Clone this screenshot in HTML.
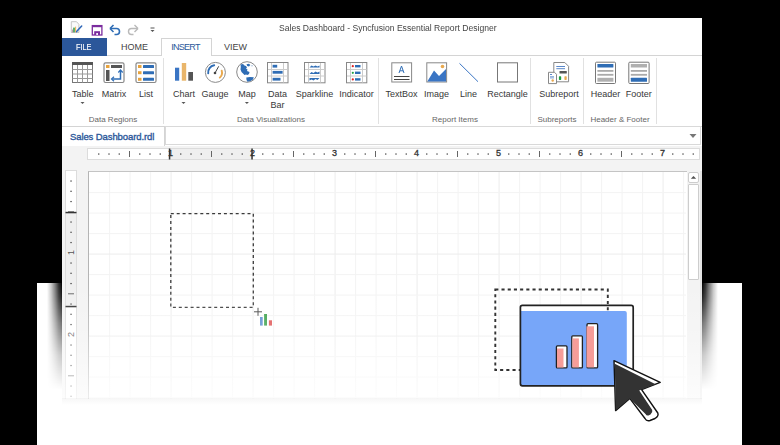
<!DOCTYPE html><html><head><meta charset="utf-8"><style>
*{margin:0;padding:0;box-sizing:border-box}
html,body{width:780px;height:445px;overflow:hidden;background:#000}
body{position:relative;font-family:"Liberation Sans",sans-serif;color:#444}
.abs{position:absolute}
.t{position:absolute;white-space:nowrap;line-height:1}
svg{position:absolute;overflow:visible}
</style></head><body>
<div class="abs" style="left:37px;top:283px;width:705px;height:162px;background:#fff"></div><div class="abs" style="left:47px;top:283px;width:15px;height:116px;background:linear-gradient(to left,rgba(0,0,0,1) 0%,rgba(0,0,0,0.82) 22%,rgba(0,0,0,0.52) 45%,rgba(0,0,0,0.22) 72%,rgba(0,0,0,0) 100%);-webkit-mask-image:linear-gradient(to bottom,#000 0%,rgba(0,0,0,0.88) 12%,rgba(0,0,0,0.55) 35%,rgba(0,0,0,0.22) 62%,rgba(0,0,0,0) 92%)"></div><div class="abs" style="left:702px;top:283px;width:16px;height:116px;background:linear-gradient(to right,rgba(0,0,0,1) 0%,rgba(0,0,0,0.82) 22%,rgba(0,0,0,0.52) 45%,rgba(0,0,0,0.22) 72%,rgba(0,0,0,0) 100%);-webkit-mask-image:linear-gradient(to bottom,#000 0%,rgba(0,0,0,0.88) 12%,rgba(0,0,0,0.55) 35%,rgba(0,0,0,0.22) 62%,rgba(0,0,0,0) 92%)"></div><div class="abs" id="win" style="left:62px;top:18px;width:640px;height:381px;background:#fff;overflow:hidden"><div class="abs" style="left:-62px;top:-18px;width:780px;height:445px"><div class="t" style="left:279px;top:22.8px;font-size:9.6px;color:#444;transform:scaleX(0.895);transform-origin:0 0">Sales Dashboard - Syncfusion Essential Report Designer</div><svg style="left:0;top:0" width="780" height="445" viewBox="0 0 780 445">
<!-- app icon -->
<path d="M71.3 21.7 h5.2 l2.4 2.6 v8.2 h-7.6 z" fill="#fafafa" stroke="#bdbdbd" stroke-width="0.9"/>
<rect x="72.3" y="29.5" width="0.9" height="2.8" fill="#b07090"/>
<rect x="73.1" y="27.6" width="1.8" height="4.7" fill="#4fa860"/>
<rect x="75" y="26.7" width="1.1" height="5.6" fill="#f0b860"/>
<path d="M76.6 31.6 L81.7 26.1" stroke="#2f67b8" stroke-width="1.5" stroke-linecap="round"/>
<!-- save -->
<rect x="92.3" y="25.6" width="9.6" height="9.4" fill="none" stroke="#7b2c9e" stroke-width="1.3"/>
<rect x="92.3" y="25.6" width="9.6" height="1.6" fill="#7b2c9e"/>
<rect x="94.2" y="31.2" width="5.8" height="3.8" fill="#7b2c9e"/>
<rect x="96.3" y="33" width="1.6" height="2" fill="#fff"/>
<!-- undo -->
<path d="M111 28.5 h5.5 a3 3 0 0 1 0 6 h-2" fill="none" stroke="#2f6db5" stroke-width="1.6"/>
<path d="M110 28.5 l3.5 -3.5 M110 28.5 l3.5 3.5" fill="none" stroke="#2f6db5" stroke-width="1.6"/>
<!-- redo -->
<path d="M137 28.5 h-5.5 a3 3 0 0 0 0 6 h2" fill="none" stroke="#b9b9b9" stroke-width="1.4"/>
<path d="M138 28.5 l-3.5 -3.5 M138 28.5 l-3.5 3.5" fill="none" stroke="#b9b9b9" stroke-width="1.4"/>
<!-- customize -->
<rect x="150.5" y="27.5" width="4" height="1" fill="#555"/>
<path d="M150.5 30 h4 l-2 2 z" fill="#555"/>
</svg><div class="abs" style="left:62px;top:55px;width:640px;height:1px;background:#d4d4d4"></div><div class="abs" style="left:62px;top:38px;width:45px;height:18px;background:#2b579a"></div><div class="t" style="left:76.3px;top:42.8px;font-size:9.2px;color:#fff;-webkit-text-stroke:0.15px #fff;transform:scaleX(0.8);transform-origin:0 0">FILE</div><div class="t" style="left:121px;top:42.6px;font-size:9px;color:#444">HOME</div><div class="abs" style="left:161px;top:38px;width:51px;height:18px;background:#fff;border:1px solid #d4d4d4;border-bottom:none"></div><div class="t" style="left:171.3px;top:42.6px;font-size:9px;letter-spacing:-0.75px;color:#2b579a">INSERT</div><div class="t" style="left:224px;top:42.6px;font-size:9px;color:#444">VIEW</div><div class="abs" style="left:62px;top:126px;width:640px;height:1px;background:#d4d4d4"></div><div class="abs" style="left:163px;top:58px;width:1px;height:66px;background:#e1e1e1"></div><div class="abs" style="left:378px;top:58px;width:1px;height:66px;background:#e1e1e1"></div><div class="abs" style="left:530px;top:58px;width:1px;height:66px;background:#e1e1e1"></div><div class="abs" style="left:583px;top:58px;width:1px;height:66px;background:#e1e1e1"></div><div class="abs" style="left:656px;top:58px;width:1px;height:66px;background:#e1e1e1"></div><div class="t" style="left:22.700000000000003px;width:120px;text-align:center;top:89.6px;font-size:9px;color:#383838">Table</div><div class="t" style="left:54px;width:120px;text-align:center;top:89.6px;font-size:9px;color:#383838">Matrix</div><div class="t" style="left:86px;width:120px;text-align:center;top:89.6px;font-size:9px;color:#383838">List</div><div class="t" style="left:124px;width:120px;text-align:center;top:89.6px;font-size:9px;color:#383838">Chart</div><div class="t" style="left:155px;width:120px;text-align:center;top:89.6px;font-size:9px;color:#383838">Gauge</div><div class="t" style="left:187px;width:120px;text-align:center;top:89.6px;font-size:9px;color:#383838">Map</div><div class="t" style="left:217.5px;width:120px;text-align:center;top:89.6px;font-size:9px;color:#383838">Data</div><div class="t" style="left:217.5px;width:120px;text-align:center;top:100.6px;font-size:9px;color:#383838">Bar</div><div class="t" style="left:254.5px;width:120px;text-align:center;top:89.6px;font-size:9px;color:#383838">Sparkline</div><div class="t" style="left:296.5px;width:120px;text-align:center;top:89.6px;font-size:9px;color:#383838">Indicator</div><div class="t" style="left:341.5px;width:120px;text-align:center;top:89.6px;font-size:9px;color:#383838">TextBox</div><div class="t" style="left:376.5px;width:120px;text-align:center;top:89.6px;font-size:9px;color:#383838">Image</div><div class="t" style="left:408.5px;width:120px;text-align:center;top:89.6px;font-size:9px;color:#383838">Line</div><div class="t" style="left:447.5px;width:120px;text-align:center;top:89.6px;font-size:9px;color:#383838">Rectangle</div><div class="t" style="left:499px;width:120px;text-align:center;top:89.6px;font-size:9px;color:#383838">Subreport</div><div class="t" style="left:545.5px;width:120px;text-align:center;top:89.6px;font-size:9px;color:#383838">Header</div><div class="t" style="left:578.8px;width:120px;text-align:center;top:89.6px;font-size:9px;color:#383838">Footer</div><div class="t" style="left:53px;width:120px;text-align:center;top:115.6px;font-size:8px;color:#666">Data Regions</div><div class="t" style="left:211px;width:120px;text-align:center;top:115.6px;font-size:8px;color:#666">Data Visualizations</div><div class="t" style="left:395px;width:120px;text-align:center;top:115.6px;font-size:8px;color:#666">Report Items</div><div class="t" style="left:497px;width:120px;text-align:center;top:115.6px;font-size:8px;color:#666">Subreports</div><div class="t" style="left:560px;width:120px;text-align:center;top:115.6px;font-size:8px;color:#666">Header &amp; Footer</div><svg style="left:0;top:0" width="780" height="445" viewBox="0 0 780 445">
<g stroke="#999" stroke-width="1" fill="none">
<rect x="72.5" y="62.5" width="20" height="20" fill="#fff" stroke="#777"/>
<line x1="77.5" y1="65" x2="77.5" y2="82.5"/><line x1="82.5" y1="65" x2="82.5" y2="82.5"/><line x1="87.5" y1="65" x2="87.5" y2="82.5"/>
<line x1="72.5" y1="69.5" x2="92.5" y2="69.5"/><line x1="72.5" y1="74" x2="92.5" y2="74"/><line x1="72.5" y1="78.5" x2="92.5" y2="78.5"/>
</g>
<rect x="72" y="62" width="21" height="3" fill="#555"/>
<path d="M80.5 102 h4 l-2 2 z" fill="#555"/>
<!-- matrix -->
<rect x="104" y="62.8" width="20" height="19.7" rx="1.5" fill="#fff" stroke="#888" stroke-width="1.2"/>
<rect x="106" y="65" width="3.5" height="3" fill="#e8a33d"/>
<rect x="111" y="65" width="11" height="3" fill="#555"/>
<rect x="106" y="70" width="3.5" height="11" fill="#555"/>
<path d="M120.5 71 v8 h-8" fill="none" stroke="#2f6db5" stroke-width="1.5"/>
<path d="M118.3 72.5 l2.2 -2.5 l2.2 2.5 M114 76.8 l-2.5 2.2 l2.5 2.2" fill="none" stroke="#2f6db5" stroke-width="1.2"/>
<!-- list -->
<rect x="136" y="62.8" width="20" height="19.7" rx="1.5" fill="#fff" stroke="#888" stroke-width="1.2"/>
<rect x="138" y="65" width="3.5" height="3" fill="#e8a33d"/><rect x="143" y="65" width="11" height="3" rx="0.5" fill="#2f6db5"/>
<rect x="138" y="71.2" width="3.5" height="3" fill="#e8a33d"/><rect x="143" y="71.2" width="11" height="3" rx="0.5" fill="#2f6db5"/>
<rect x="138" y="77.8" width="3.5" height="3" fill="#e8a33d"/><rect x="143" y="77.8" width="11" height="3" rx="0.5" fill="#2f6db5"/>
<!-- chart -->
<rect x="175" y="67.7" width="4.2" height="13" fill="#3a75c4"/>
<rect x="181.8" y="63" width="4.4" height="17.7" fill="#e9b56a"/>
<rect x="188.3" y="72" width="4.7" height="8.7" fill="#555"/>
<path d="M181.5 102 h4 l-2 2 z" fill="#555"/>
<!-- gauge -->
<circle cx="215.4" cy="72.4" r="10" fill="#fff" stroke="#8a8a8a" stroke-width="1"/>
<path d="M208.2 73.4 A7.3 7.3 0 0 1 214.2 65.2" fill="none" stroke="#2f6db5" stroke-width="1.9" stroke-linecap="round"/>
<path d="M221.7 70.6 A6.8 6.8 0 0 1 219.8 77.6" fill="none" stroke="#e9a94e" stroke-width="1.9" stroke-linecap="round"/>
<line x1="215" y1="73" x2="218.7" y2="66.3" stroke="#444" stroke-width="1"/>
<circle cx="215" cy="73" r="1.3" fill="#444"/>
<!-- map -->
<circle cx="247" cy="72" r="10.3" fill="#fff" stroke="#8a8a8a" stroke-width="1"/>
<path d="M240.5 64.5 L243 64 L244.5 65.5 L246 66 L247 67.5 L246 68.5 L247.5 69.5 L247 71 L249.5 72 L249 74 L247.5 75 L246 74.5 L244.5 75 L243 73.5 L241.5 72 L240.5 69.5 L240.8 67 Z" fill="#2f6db5"/>
<path d="M246.5 64.3 L249 63.8 L250.3 65 L249 66.5 L247.2 66 Z" fill="#2f6db5"/>
<circle cx="252" cy="65.8" r="0.5" fill="#2f6db5"/>
<path d="M246.3 77.6 L250 77 L253.8 77.2 L253 79.5 L250.5 81 L247.5 81.8 L246.5 80 Z" fill="#2f6db5"/>
<path d="M244.9 102 h4 l-2 2 z" fill="#555"/>
<!-- databar / sparkline / indicator -->
<g stroke="#888" stroke-width="1" fill="#fff">
<rect x="267.5" y="62.5" width="20.5" height="20.3"/>
<rect x="304.5" y="62.5" width="20.5" height="20.3"/>
<rect x="346.5" y="62.5" width="20.3" height="20.3"/>
</g>
<g stroke="#ccc" stroke-width="1">
<line x1="271.5" y1="63" x2="271.5" y2="82.5"/><line x1="283.5" y1="63" x2="283.5" y2="82.5"/>
<line x1="268" y1="69.5" x2="287.5" y2="69.5"/><line x1="268" y1="76" x2="287.5" y2="76"/>
<line x1="308.5" y1="63" x2="308.5" y2="82.5"/><line x1="320.5" y1="63" x2="320.5" y2="82.5"/>
<line x1="305" y1="69.5" x2="324.5" y2="69.5"/><line x1="305" y1="76" x2="324.5" y2="76"/>
<line x1="350.5" y1="63" x2="350.5" y2="82.5"/><line x1="362.5" y1="63" x2="362.5" y2="82.5"/>
<line x1="347" y1="69.5" x2="366.5" y2="69.5"/><line x1="347" y1="76" x2="366.5" y2="76"/>
</g>
<rect x="272.6" y="64.8" width="4.6" height="2.8" fill="#2f6db5"/>
<rect x="272.6" y="70.9" width="10" height="2.8" fill="#2f6db5"/>
<rect x="272.6" y="77.8" width="7.9" height="2.8" fill="#2f6db5"/>
<path d="M309.5 67.5 l2 -2 l2 1 l2 -1 l2 1 l2 -1 v2 h-10z" fill="#2f6db5"/>
<path d="M309.5 74 l2 -2 l2 1 l2 -1.5 l2 1 l2 -1 v2.5 h-10z" fill="#2f6db5"/>
<path d="M309.5 78 h10 l-2 2 l-2 -1 l-2 1.5 l-2 -1 l-2 1 z" fill="#2f6db5"/>
<circle cx="352.8" cy="66.2" r="1.1" fill="#e02020"/><rect x="355" y="65" width="5.5" height="2.4" fill="#2f6db5"/>
<circle cx="352.8" cy="72.8" r="1.1" fill="#20a040"/><rect x="355" y="71.6" width="5.5" height="2.4" fill="#2f6db5"/>
<circle cx="352.8" cy="79.4" r="1.1" fill="#e02020"/><rect x="355" y="78.2" width="5.5" height="2.4" fill="#2f6db5"/>
<!-- textbox -->
<rect x="391.8" y="62.8" width="19.8" height="19.2" fill="#fff" stroke="#888" stroke-width="1"/>
<path d="M399 73 l2.5 -7 l2.5 7 M400 70.8 h3" fill="none" stroke="#2f6db5" stroke-width="1"/>
<line x1="394" y1="76.5" x2="409.5" y2="76.5" stroke="#444" stroke-width="1"/>
<line x1="394" y1="79.5" x2="409.5" y2="79.5" stroke="#444" stroke-width="1"/>
<!-- image -->
<rect x="426.8" y="62.8" width="19.8" height="19.2" fill="#fff" stroke="#888" stroke-width="1"/>
<path d="M427.3 81.5 L434 70.5 L439 76 L446 69 V81.5 Z" fill="#3a75c4"/>
<circle cx="442.5" cy="66.5" r="1.8" fill="#e9a94e"/>
<!-- line -->
<line x1="459.5" y1="63.4" x2="478" y2="81.7" stroke="#3a75c4" stroke-width="1"/>
<!-- rectangle -->
<rect x="497.5" y="62.8" width="20" height="19.2" fill="#fff" stroke="#777" stroke-width="1"/>
<!-- subreport -->
<path d="M553.8 62.5 h11 l3.8 3.8 v15.5 h-14.8 z" fill="#fff" stroke="#888" stroke-width="1"/>
<line x1="556.3" y1="66.5" x2="565" y2="66.5" stroke="#4a7cc4" stroke-width="0.9"/>
<line x1="556.3" y1="68.7" x2="565" y2="68.7" stroke="#4a7cc4" stroke-width="0.9"/>
<rect x="559.5" y="71" width="7.3" height="2.6" rx="0.5" fill="#555"/>
<rect x="558.9" y="76.3" width="2.3" height="3.6" rx="0.6" fill="#20a040"/>
<rect x="564.4" y="76.3" width="2.3" height="3.6" rx="0.6" fill="#e9a94e"/>
<path d="M548.5 72.3 h6 l2 2 v9.3 h-8 z" fill="#fff" stroke="#888" stroke-width="1"/>
<line x1="550" y1="74.5" x2="552" y2="74.5" stroke="#4a7cc4" stroke-width="0.9"/>
<line x1="550" y1="76.8" x2="554" y2="76.8" stroke="#4a7cc4" stroke-width="0.8"/>
<line x1="550" y1="78" x2="554" y2="78" stroke="#4a7cc4" stroke-width="0.6"/>
<circle cx="552.7" cy="80.5" r="1.2" fill="#e9a94e"/>
<!-- header/footer -->
<rect x="595.5" y="62.2" width="20" height="21.3" rx="1" fill="#fff" stroke="#777" stroke-width="1"/>
<rect x="597.4" y="64" width="16" height="3.5" rx="0.5" fill="#2f6db5"/>
<rect x="597.4" y="70" width="16" height="1.8" fill="#aaa"/>
<rect x="597.4" y="73.9" width="16" height="1.8" fill="#aaa"/>
<rect x="597.4" y="77.8" width="16" height="3.9" fill="#b0b0b0"/>
<rect x="628.8" y="62.2" width="20.3" height="21.3" rx="1" fill="#fff" stroke="#777" stroke-width="1"/>
<rect x="630.8" y="64" width="16.2" height="3.5" fill="#b0b0b0"/>
<rect x="630.8" y="70" width="16.2" height="1.8" fill="#aaa"/>
<rect x="630.8" y="73.9" width="16.2" height="1.8" fill="#aaa"/>
<rect x="630.8" y="77.8" width="16.2" height="3.9" rx="0.5" fill="#2f6db5"/>
</svg><div class="abs" style="left:165px;top:126px;width:536px;height:19px;border:1px solid #d9d9d9;background:#fff"></div><div class="abs" style="left:164px;top:127px;width:1px;height:19px;background:#d4d4d4"></div><div class="t" style="left:70px;top:131.5px;font-size:9.5px;letter-spacing:-0.1px;color:#2b579a;-webkit-text-stroke:0.35px #2b579a">Sales Dashboard.rdl</div><svg style="left:0;top:0" width="780" height="445"><path d="M689.5 134 h7 l-3.5 4 z" fill="#777"/></svg><div class="abs" style="left:62px;top:146px;width:640px;height:300px;background:#f3f3f3"></div><div class="abs" style="left:87px;top:148px;width:613px;height:12px;background:#fff;border:1px solid #dcdcdc"></div><div class="abs" style="left:170px;top:149px;width:82px;height:10px;background:#efefef"></div><div class="abs" style="left:65px;top:170px;width:12px;height:280px;background:#fff;border:1px solid #dcdcdc"></div><div class="abs" style="left:66px;top:213px;width:10px;height:94px;background:#efefef"></div><div class="abs" style="left:88px;top:171px;width:599px;height:280px;background:#fff;border-left:1px solid #b4b4b4;border-top:1px solid #c4c4c4"></div><svg style="left:0;top:0" width="780" height="445"><g stroke-width="1"><line x1="109.60" y1="172.1" x2="109.60" y2="445" stroke="#f3f3f3"/><line x1="130.10" y1="172.1" x2="130.10" y2="445" stroke="#f3f3f3"/><line x1="150.60" y1="172.1" x2="150.60" y2="445" stroke="#f3f3f3"/><line x1="171.10" y1="172.1" x2="171.10" y2="445" stroke="#ececec"/><line x1="191.60" y1="172.1" x2="191.60" y2="445" stroke="#f3f3f3"/><line x1="212.10" y1="172.1" x2="212.10" y2="445" stroke="#f3f3f3"/><line x1="232.60" y1="172.1" x2="232.60" y2="445" stroke="#f3f3f3"/><line x1="253.10" y1="172.1" x2="253.10" y2="445" stroke="#ececec"/><line x1="273.60" y1="172.1" x2="273.60" y2="445" stroke="#f3f3f3"/><line x1="294.10" y1="172.1" x2="294.10" y2="445" stroke="#f3f3f3"/><line x1="314.60" y1="172.1" x2="314.60" y2="445" stroke="#f3f3f3"/><line x1="335.10" y1="172.1" x2="335.10" y2="445" stroke="#ececec"/><line x1="355.60" y1="172.1" x2="355.60" y2="445" stroke="#f3f3f3"/><line x1="376.10" y1="172.1" x2="376.10" y2="445" stroke="#f3f3f3"/><line x1="396.60" y1="172.1" x2="396.60" y2="445" stroke="#f3f3f3"/><line x1="417.10" y1="172.1" x2="417.10" y2="445" stroke="#ececec"/><line x1="437.60" y1="172.1" x2="437.60" y2="445" stroke="#f3f3f3"/><line x1="458.10" y1="172.1" x2="458.10" y2="445" stroke="#f3f3f3"/><line x1="478.60" y1="172.1" x2="478.60" y2="445" stroke="#f3f3f3"/><line x1="499.10" y1="172.1" x2="499.10" y2="445" stroke="#ececec"/><line x1="519.60" y1="172.1" x2="519.60" y2="445" stroke="#f3f3f3"/><line x1="540.10" y1="172.1" x2="540.10" y2="445" stroke="#f3f3f3"/><line x1="560.60" y1="172.1" x2="560.60" y2="445" stroke="#f3f3f3"/><line x1="581.10" y1="172.1" x2="581.10" y2="445" stroke="#ececec"/><line x1="601.60" y1="172.1" x2="601.60" y2="445" stroke="#f3f3f3"/><line x1="622.10" y1="172.1" x2="622.10" y2="445" stroke="#f3f3f3"/><line x1="642.60" y1="172.1" x2="642.60" y2="445" stroke="#f3f3f3"/><line x1="663.10" y1="172.1" x2="663.10" y2="445" stroke="#ececec"/><line x1="683.60" y1="172.1" x2="683.60" y2="445" stroke="#f3f3f3"/><line x1="89.1" y1="192.60" x2="686" y2="192.60" stroke="#f3f3f3"/><line x1="89.1" y1="213.10" x2="686" y2="213.10" stroke="#f3f3f3"/><line x1="89.1" y1="233.60" x2="686" y2="233.60" stroke="#f3f3f3"/><line x1="89.1" y1="254.10" x2="686" y2="254.10" stroke="#ececec"/><line x1="89.1" y1="274.60" x2="686" y2="274.60" stroke="#f3f3f3"/><line x1="89.1" y1="295.10" x2="686" y2="295.10" stroke="#f3f3f3"/><line x1="89.1" y1="315.60" x2="686" y2="315.60" stroke="#f3f3f3"/><line x1="89.1" y1="336.10" x2="686" y2="336.10" stroke="#ececec"/><line x1="89.1" y1="356.60" x2="686" y2="356.60" stroke="#f3f3f3"/><line x1="89.1" y1="377.10" x2="686" y2="377.10" stroke="#f3f3f3"/><line x1="89.1" y1="397.60" x2="686" y2="397.60" stroke="#f3f3f3"/><line x1="89.1" y1="418.10" x2="686" y2="418.10" stroke="#ececec"/><line x1="89.1" y1="438.60" x2="686" y2="438.60" stroke="#f3f3f3"/></g></svg><div class="abs" style="left:687px;top:171px;width:15px;height:280px;background:#f3f3f3"></div><div class="abs" style="left:688px;top:171.5px;width:11px;height:11px;background:#fff;border:1px solid #cdcdcd;border-radius:2px"></div><svg style="left:0;top:0" width="780" height="445"><path d="M690.8 178.8 h5.4 l-2.7 -2.8 z" fill="#505050"/></svg><div class="abs" style="left:688px;top:183.5px;width:11px;height:96px;background:#fff;border:1px solid #cdcdcd;border-radius:1px"></div><div class="abs" style="left:700px;top:171px;width:2px;height:230px;background:#e4e4e4"></div><div class="t" style="left:160.50px;width:20px;text-align:center;top:149.3px;font-size:9px;color:#333;-webkit-text-stroke:0.3px #333">1</div><div class="t" style="left:242.50px;width:20px;text-align:center;top:149.3px;font-size:9px;color:#333;-webkit-text-stroke:0.3px #333">2</div><div class="t" style="left:324.50px;width:20px;text-align:center;top:149.3px;font-size:9px;color:#333;-webkit-text-stroke:0.3px #333">3</div><div class="t" style="left:406.50px;width:20px;text-align:center;top:149.3px;font-size:9px;color:#333;-webkit-text-stroke:0.3px #333">4</div><div class="t" style="left:488.50px;width:20px;text-align:center;top:149.3px;font-size:9px;color:#333;-webkit-text-stroke:0.3px #333">5</div><div class="t" style="left:570.50px;width:20px;text-align:center;top:149.3px;font-size:9px;color:#333;-webkit-text-stroke:0.3px #333">6</div><div class="t" style="left:652.50px;width:20px;text-align:center;top:149.3px;font-size:9px;color:#333;-webkit-text-stroke:0.3px #333">7</div><div class="t" style="left:61px;width:20px;text-align:center;top:248.30px;font-size:9px;color:#555;transform:rotate(-90deg)">1</div><div class="t" style="left:61px;width:20px;text-align:center;top:330.30px;font-size:9px;color:#555;transform:rotate(-90deg)">2</div><svg style="left:0;top:0" width="780" height="445"><rect x="98.15" y="153.3" width="1.2" height="1.5" fill="#555"/><rect x="108.40" y="153.3" width="1.2" height="1.5" fill="#555"/><rect x="118.65" y="153.3" width="1.2" height="1.5" fill="#555"/><rect x="129.00" y="151" width="1" height="6" fill="#666"/><rect x="139.15" y="153.3" width="1.2" height="1.5" fill="#555"/><rect x="149.40" y="153.3" width="1.2" height="1.5" fill="#555"/><rect x="159.65" y="153.3" width="1.2" height="1.5" fill="#555"/><rect x="180.15" y="153.3" width="1.2" height="1.5" fill="#555"/><rect x="190.40" y="153.3" width="1.2" height="1.5" fill="#555"/><rect x="200.65" y="153.3" width="1.2" height="1.5" fill="#555"/><rect x="211.00" y="151" width="1" height="6" fill="#666"/><rect x="221.15" y="153.3" width="1.2" height="1.5" fill="#555"/><rect x="231.40" y="153.3" width="1.2" height="1.5" fill="#555"/><rect x="241.65" y="153.3" width="1.2" height="1.5" fill="#555"/><rect x="262.15" y="153.3" width="1.2" height="1.5" fill="#555"/><rect x="272.40" y="153.3" width="1.2" height="1.5" fill="#555"/><rect x="282.65" y="153.3" width="1.2" height="1.5" fill="#555"/><rect x="293.00" y="151" width="1" height="6" fill="#666"/><rect x="303.15" y="153.3" width="1.2" height="1.5" fill="#555"/><rect x="313.40" y="153.3" width="1.2" height="1.5" fill="#555"/><rect x="323.65" y="153.3" width="1.2" height="1.5" fill="#555"/><rect x="344.15" y="153.3" width="1.2" height="1.5" fill="#555"/><rect x="354.40" y="153.3" width="1.2" height="1.5" fill="#555"/><rect x="364.65" y="153.3" width="1.2" height="1.5" fill="#555"/><rect x="375.00" y="151" width="1" height="6" fill="#666"/><rect x="385.15" y="153.3" width="1.2" height="1.5" fill="#555"/><rect x="395.40" y="153.3" width="1.2" height="1.5" fill="#555"/><rect x="405.65" y="153.3" width="1.2" height="1.5" fill="#555"/><rect x="426.15" y="153.3" width="1.2" height="1.5" fill="#555"/><rect x="436.40" y="153.3" width="1.2" height="1.5" fill="#555"/><rect x="446.65" y="153.3" width="1.2" height="1.5" fill="#555"/><rect x="457.00" y="151" width="1" height="6" fill="#666"/><rect x="467.15" y="153.3" width="1.2" height="1.5" fill="#555"/><rect x="477.40" y="153.3" width="1.2" height="1.5" fill="#555"/><rect x="487.65" y="153.3" width="1.2" height="1.5" fill="#555"/><rect x="508.15" y="153.3" width="1.2" height="1.5" fill="#555"/><rect x="518.40" y="153.3" width="1.2" height="1.5" fill="#555"/><rect x="528.65" y="153.3" width="1.2" height="1.5" fill="#555"/><rect x="539.00" y="151" width="1" height="6" fill="#666"/><rect x="549.15" y="153.3" width="1.2" height="1.5" fill="#555"/><rect x="559.40" y="153.3" width="1.2" height="1.5" fill="#555"/><rect x="569.65" y="153.3" width="1.2" height="1.5" fill="#555"/><rect x="590.15" y="153.3" width="1.2" height="1.5" fill="#555"/><rect x="600.40" y="153.3" width="1.2" height="1.5" fill="#555"/><rect x="610.65" y="153.3" width="1.2" height="1.5" fill="#555"/><rect x="621.00" y="151" width="1" height="6" fill="#666"/><rect x="631.15" y="153.3" width="1.2" height="1.5" fill="#555"/><rect x="641.40" y="153.3" width="1.2" height="1.5" fill="#555"/><rect x="651.65" y="153.3" width="1.2" height="1.5" fill="#555"/><rect x="672.15" y="153.3" width="1.2" height="1.5" fill="#555"/><rect x="682.40" y="153.3" width="1.2" height="1.5" fill="#555"/><rect x="692.65" y="153.3" width="1.2" height="1.5" fill="#555"/><rect x="168.80" y="148.5" width="1.5" height="11" fill="#333"/><rect x="251.30" y="148.5" width="1.5" height="11" fill="#333"/><rect x="70.3" y="180.45" width="1.5" height="1.2" fill="#555"/><rect x="70.3" y="190.70" width="1.5" height="1.2" fill="#555"/><rect x="70.3" y="200.95" width="1.5" height="1.2" fill="#555"/><rect x="68" y="211.30" width="6" height="1" fill="#666"/><rect x="70.3" y="221.45" width="1.5" height="1.2" fill="#555"/><rect x="70.3" y="231.70" width="1.5" height="1.2" fill="#555"/><rect x="70.3" y="241.95" width="1.5" height="1.2" fill="#555"/><rect x="70.3" y="262.45" width="1.5" height="1.2" fill="#555"/><rect x="70.3" y="272.70" width="1.5" height="1.2" fill="#555"/><rect x="70.3" y="282.95" width="1.5" height="1.2" fill="#555"/><rect x="68" y="293.30" width="6" height="1" fill="#666"/><rect x="70.3" y="303.45" width="1.5" height="1.2" fill="#555"/><rect x="70.3" y="313.70" width="1.5" height="1.2" fill="#555"/><rect x="70.3" y="323.95" width="1.5" height="1.2" fill="#555"/><rect x="70.3" y="344.45" width="1.5" height="1.2" fill="#555"/><rect x="70.3" y="354.70" width="1.5" height="1.2" fill="#555"/><rect x="70.3" y="364.95" width="1.5" height="1.2" fill="#555"/><rect x="68" y="375.30" width="6" height="1" fill="#666"/><rect x="70.3" y="385.45" width="1.5" height="1.2" fill="#555"/><rect x="70.3" y="395.70" width="1.5" height="1.2" fill="#555"/><rect x="70.3" y="405.95" width="1.5" height="1.2" fill="#555"/><rect x="70.3" y="426.45" width="1.5" height="1.2" fill="#555"/><rect x="70.3" y="436.70" width="1.5" height="1.2" fill="#555"/><rect x="65.5" y="211.80" width="11" height="1.5" fill="#333"/><rect x="65.5" y="305.80" width="11" height="1.5" fill="#333"/></svg><svg style="left:0;top:0" width="780" height="445">
<rect x="170.8" y="213.6" width="82.5" height="93.8" fill="none" stroke="#3a3a3a" stroke-width="1.3" stroke-dasharray="3 2.9"/>
<path d="M254 311.8 h8 M258 307.8 v8" stroke="#444" stroke-width="1"/>
<rect x="260" y="317" width="2.7" height="8.6" fill="#5b8fd0"/>
<rect x="264.1" y="314" width="2.9" height="11.6" fill="#3aa04a"/>
<rect x="268.9" y="320.3" width="3.1" height="5.3" fill="#e05555"/>
</svg></div></div><div class="abs" style="left:62px;top:283px;width:640px;height:116px;background:linear-gradient(to bottom,rgba(255,255,255,0) 0%,rgba(255,255,255,0.2) 40%,rgba(255,255,255,0.55) 80%,rgba(255,255,255,0.75) 100%)"></div><div class="abs" style="left:62px;top:398px;width:640px;height:7px;background:linear-gradient(to bottom,rgba(0,0,0,0.035),rgba(0,0,0,0))"></div><svg style="left:0;top:0" width="780" height="445">
<rect x="520.4" y="305.4" width="112.8" height="80.4" rx="2" fill="#fff"/>
<rect x="495.3" y="289.5" width="112.5" height="80.5" fill="none" stroke="#333" stroke-width="1.9" stroke-dasharray="3.1 3.1"/>
<path d="M520.6 311 H624.8 a2 2 0 0 1 2 2 V385.6 H522.6 a2 2 0 0 1 -2 -2 Z" fill="#77a6f9"/>
<rect x="520.4" y="305.4" width="112.8" height="80.4" rx="2" fill="none" stroke="#222" stroke-width="1.7"/>
<g stroke="#222" stroke-width="1.3">
<rect x="556.4" y="345.9" width="10.6" height="22" rx="1" fill="#fff"/>
<rect x="571.8" y="335.8" width="10.6" height="32.1" rx="1" fill="#fff"/>
<rect x="587" y="323.7" width="10.6" height="44.2" rx="1" fill="#fff"/>
</g>
<rect x="557" y="348.5" width="6.5" height="19" fill="#f69d99"/>
<rect x="572.4" y="338.4" width="6.5" height="29" fill="#f69d99"/>
<rect x="586.5" y="326.3" width="7.5" height="41" fill="#f69d99"/>
<path d="M614 360.6 L660.2 382.4 L641.6 389.6 L657.8 413 Q659 416 655 418.5 L650 420.5 Q646.5 421.5 645 418.5 L629.8 398.4 L615.6 410.6 Z" fill="#fff" stroke="#111" stroke-width="1.4" stroke-linejoin="round"/>
<path d="M614.8 363.8 L655.6 384.2 L639.2 390.4 L652.2 410 Q653 412.5 650.5 414.5 L648.5 415.5 Q646.5 416 645.5 414 L629.8 398.4 L615.6 410.2 Z" fill="#333"/>
</svg></body></html>
